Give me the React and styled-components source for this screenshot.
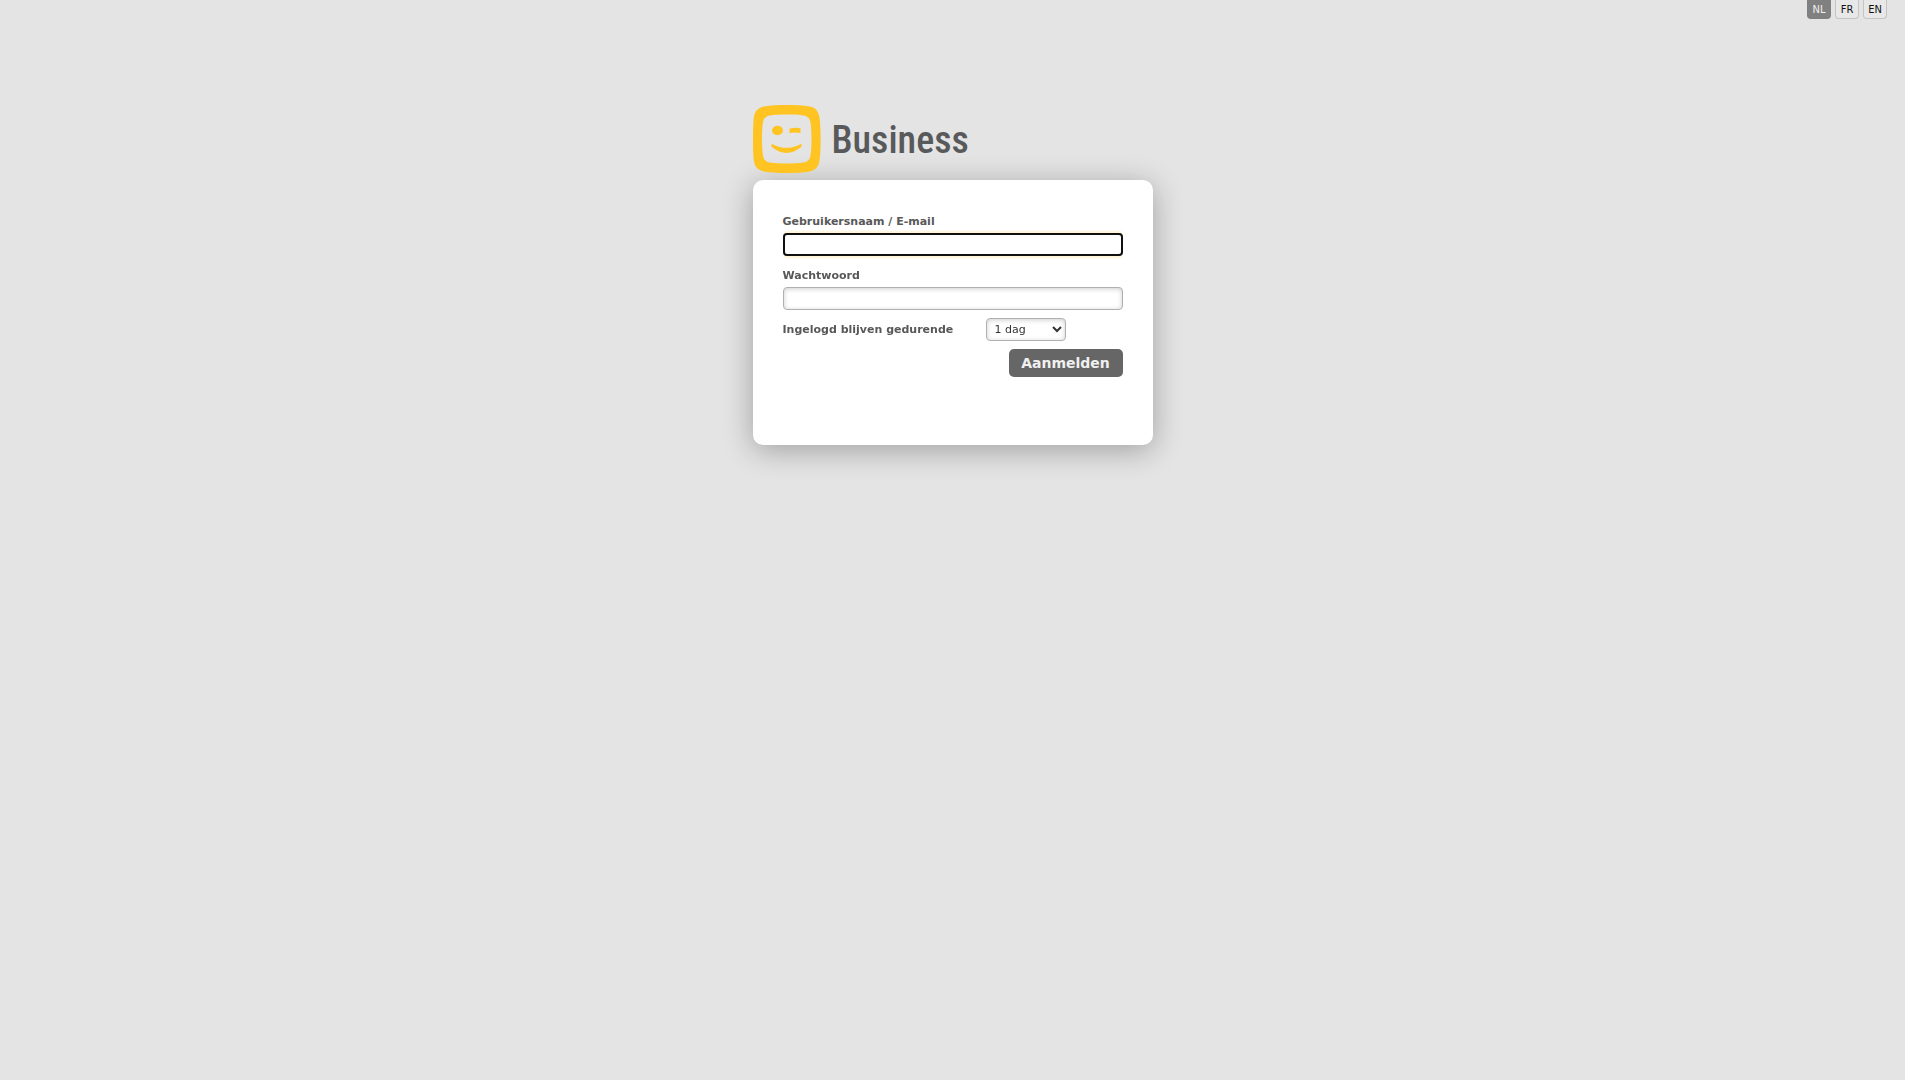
import React from "react";
import styled, { createGlobalStyle } from "styled-components";

const GlobalStyle = createGlobalStyle`
  * {
    box-sizing: border-box;
  }
  body {
    margin: 0;
    background: #e4e4e4;
    color: #585858;
    font: 11px/14px "DejaVu Sans", sans-serif;
  }
`;

const Page = styled.div`
  min-height: 100vh;
  padding-bottom: 40px;
`;

const Languages = styled.nav`
  display: flex;
  justify-content: flex-end;
  gap: 4px;
  padding-right: 18px;
`;

const Language = styled.a`
  width: 24px;
  height: 19px;
  border: 1px solid ${(p) => (p.$active ? "#808080" : "#c4c4c4")};
  border-top: 0;
  border-radius: 0 0 4px 4px;
  background: ${(p) => (p.$active ? "#808080" : "#e8e8e8")};
  color: ${(p) => (p.$active ? "#f0f0f0" : "#111")};
  font: 11px/20px "DejaVu Sans Condensed", "DejaVu Sans", sans-serif;
  text-align: center;
  text-decoration: none;
`;

const Main = styled.main`
  width: 400px;
  max-width: 100%;
  margin: 86px auto 0;
`;

const Brand = styled.header`
  display: flex;
  align-items: center;
  gap: 11px;
  height: 68px;
  margin-bottom: 7px;
`;

const BrandName = styled.span`
  padding-top: 2px;
  color: #58595b;
  font: 500 38px/48px "Roboto Condensed", "Roboto", sans-serif;
`;

const Card = styled.form`
  display: flex;
  flex-direction: column;
  padding: 35px 30px 68px;
  border-radius: 10px;
  background: #fff;
  box-shadow: 0 5px 30px rgba(0, 0, 0, 0.3);
`;

const Label = styled.label`
  font-weight: bold;
`;

const Field = styled.div`
  display: flex;
  flex-direction: column;
  gap: 4px;
  margin-bottom: 13px;
`;

const Input = styled.input`
  width: 100%;
  height: 23px;
  padding: 2px 6px;
  border: 1px solid #b0b0b0;
  border-radius: 4px;
  background: #fff;
  box-shadow: inset 0 1px 5px rgba(0, 0, 0, 0.2);
  color: #333;
  font: inherit;

  &:focus {
    outline: 2px solid #101010;
    outline-offset: -2px;
    box-shadow: 0 -3px 2px -1px #fff3d6, 0 3px 2px -1px #fff3d6;
  }
`;

const Row = styled.div`
  display: grid;
  grid-template-columns: 203px 80px;
  align-items: center;
  margin: -5px 0 8px;
`;

const Select = styled.select`
  height: 23px;
  padding: 0 3px 0 4px;
  border: 1px solid #b0b0b0;
  border-radius: 4px;
  background: #fff;
  box-shadow: inset 0 1px 5px rgba(0, 0, 0, 0.2);
  color: #333;
  font: inherit;
`;

const Submit = styled.button`
  align-self: flex-end;
  min-width: 114px;
  height: 28px;
  padding: 0 12px;
  border: 0;
  border-radius: 5px;
  background: #666;
  color: #f0f0f0;
  font: bold 14px/28px "DejaVu Sans", sans-serif;
`;

const Logo = () => (
  <svg width="68" height="68" viewBox="0 0 68 68" aria-hidden="true">
    <path
      fill="#ffc421"
      fillRule="evenodd"
      d="M34 0C44 0 51 .5 55.500 1.200C62.500 2.300 65.500 6 66.500 12.500C67.300 18 67.600 25 67.600 34C67.600 43 67.300 50 66.500 55.500C65.500 62 62.500 65.500 55.500 66.700C51 67.400 44 68 34 68C24 68 17 67.400 12.500 66.700C5 65.500 1.700 62 .8 55.500C.2 50 0 43 0 34C0 25 .2 18 .8 12.500C1.700 6 5 2.300 12.500 1.200C17 .5 24 0 34 0ZM34 9.500C26 9.500 21 9.800 17 10.500C12.700 11.300 10.800 13.200 10 17.500C9.300 22 9 27 9 34C9 41 9.300 46 10 50.500C10.800 54.800 12.700 56.700 17 57.500C21 58.200 26 58.500 34 58.500C42 58.500 46 58.200 50.500 57.500C54.800 56.700 56.700 54.800 57.500 50.500C58.200 46 58.500 41 58.500 34C58.500 27 58.200 22 57.500 17.500C56.700 13.200 54.800 11.300 50.500 10.500C46 9.800 42 9.500 34 9.500Z"
    />
    <ellipse cx="24.500" cy="25.500" rx="5.500" ry="4.700" fill="#ffc421" />
    <path
      fill="#ffc421"
      d="M36.500 23.800Q41.500 21.800 47.500 23.300V28Q42 26.900 36.500 27.900ZM18.500 38.700Q33.500 47 48.500 38.700V41.800Q41 48 33.500 48Q26 48 18.500 41.800Z"
    />
  </svg>
);

export default function App() {
  return (
    <Page>
      <GlobalStyle />
      <Languages>
        <Language href="#nl" $active>NL</Language>
        <Language href="#fr">FR</Language>
        <Language href="#en">EN</Language>
      </Languages>
      <Main>
        <Brand>
          <Logo />
          <BrandName>Business</BrandName>
        </Brand>
        <Card>
          <Field>
            <Label htmlFor="username">Gebruikersnaam / E-mail</Label>
            <Input id="username" type="text" autoFocus />
          </Field>
          <Field>
            <Label htmlFor="password">Wachtwoord</Label>
            <Input id="password" type="password" />
          </Field>
          <Row>
            <Label htmlFor="duration">Ingelogd blijven gedurende</Label>
            <Select id="duration" defaultValue="1">
              <option value="1">1 dag</option>
            </Select>
          </Row>
          <Submit type="button">Aanmelden</Submit>
        </Card>
      </Main>
    </Page>
  );
}
